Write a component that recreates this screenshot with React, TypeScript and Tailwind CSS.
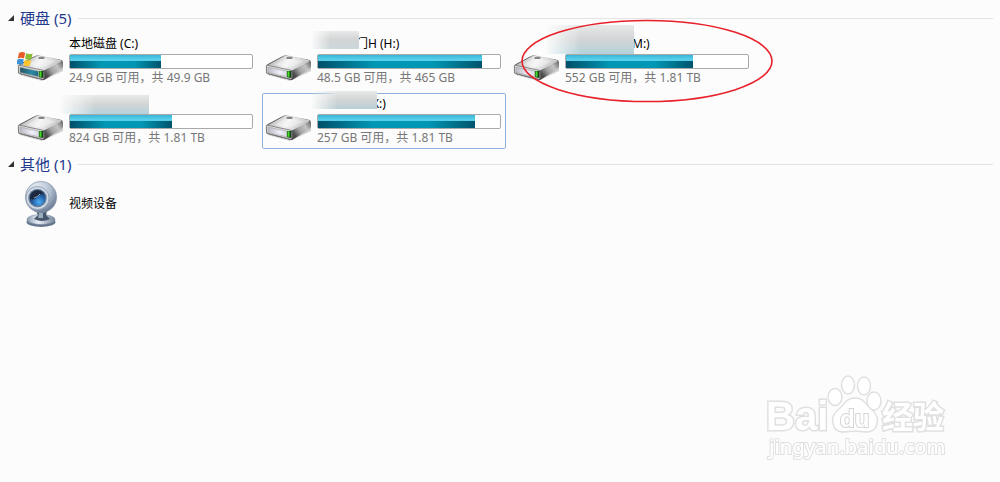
import { useId } from "react";

type Drive = {
    id: string;
    name: string;
    mask?: string;
    smudge?: string;
    info: string;
    used: number;
    system?: boolean;
    selected?: boolean;
    circled?: boolean;
};

const drives: Drive[] = [
    { id: "c", name: "本地磁盘 (C:)", info: "24.9 GB 可用，共 49.9 GB", used: 50, system: true },
    { id: "h", name: "门H (H:)", mask: "w-[39px]", smudge: "-left-1.5 -top-[5px] h-[18px] w-12 to-[#cbd8dc]", info: "48.5 GB 可用，共 465 GB", used: 90 },
    { id: "m", name: "M:)", mask: "w-[67px]", smudge: "-left-5 -top-[11px] h-[29px] w-[89px] to-[#b3d3dc]", info: "552 GB 可用，共 1.81 TB", used: 70, circled: true },
    { id: "l", name: "", mask: "w-[80px]", smudge: "-left-2.5 -top-px h-[19px] w-[90px] to-[#b3d3dc]", info: "824 GB 可用，共 1.81 TB", used: 56 },
    { id: "k", name: "X:)", mask: "w-[55px]", smudge: "-left-1.5 -top-[5px] h-[18px] w-[66px] to-[#b9cfd5]", info: "257 GB 可用，共 1.81 TB", used: 86, selected: true },
];

const DriveIcon = ({ system }: { system?: boolean }) => {
    const id = useId();
    return (
        <svg className="mt-4 h-8 w-12 shrink-0" viewBox="0 0 48 32" fill="none" aria-hidden="true">
            <defs>
                <linearGradient id={`${id}top`} x1="10" y1="4" x2="34" y2="22" gradientUnits="userSpaceOnUse">
                    <stop stopColor="#b9b9b9" />
                    <stop offset=".5" stopColor="#f2f2f2" />
                    <stop offset="1" stopColor="#c9c9c9" />
                </linearGradient>
                <linearGradient id={`${id}side`} x1="30" y1="26" x2="46" y2="14" gradientUnits="userSpaceOnUse">
                    <stop stopColor="#4a4a4a" />
                    <stop offset=".35" stopColor="#a4a4a4" />
                    <stop offset=".7" stopColor="#c2c2c2" />
                    <stop offset="1" stopColor="#777" />
                </linearGradient>
                <linearGradient id={`${id}front`} x1="3" y1="18" x2="27" y2="25" gradientUnits="userSpaceOnUse">
                    <stop stopColor={system ? "#28505f" : "#b8b8c0"} />
                    <stop offset=".5" stopColor={system ? "#2b8ba6" : "#f0f0fc"} />
                    <stop offset="1" stopColor={system ? "#164b5b" : "#c9c9d8"} />
                </linearGradient>
            </defs>
            <path d="M1 22l22 8 23-12v3L25 31 3 25z" fill="#000" opacity=".18" />
            <path d="M1 16.500Q1 15 3 14L18 6q2-1 4-.6L43 9.500q3 .5 3 3V17q0 1-1.500 2L28 29.500q-1 .8-3 .4L3 24q-2-.5-2-2z" fill={`url(#${id}side)`} />
            <path d="M2 15.500L18.500 6.500q2-1 4-.6l21 4q1.500.5.500 1.500L28 20q-1 .7-3 .4z" fill={`url(#${id}top)`} />
            <path d="M10 14.500L21.500 8l17 3.300L26 17.500z" fill="#fff" opacity=".35" />
            <path d="M1.300 16q.2-1 1.500-.7L25 20q2 .3 2 2v5.500q0 2-2 1.600L3 23.500q-1.500-.3-1.500-1.500z" fill="#dadada" stroke="#777" strokeWidth=".8" />
            <path d="M3 17.200l18.500 4v5.500L3 22.500z" fill={`url(#${id}front)`} stroke="#999" strokeWidth=".5" />
            <path d="M22 21h4.500v7l-4.500-.8z" fill="#174018" />
            <path d="M22.500 21.300h2v5.500h-2z" fill="#42df25" />
            <ellipse cx="24.500" cy="7.900" rx="3.200" ry="1.200" fill="#858585" />
            {system && (
                <g>
                    <path d="M2 3Q5 1.200 8.200 3L7 8.500Q4 7 .8 8.500z" fill="#e75b27" />
                    <path d="M9.200 3.300q3.200 1.500 6.500.1l-1.300 5.500q-3 1.500-6.300 0z" fill="#8abd34" />
                    <path d="M.5 9.500q3-1.500 6.300 0l-1.300 5.300q-3-1.500-6.200 0z" fill="#3c91d8" />
                    <path d="M7.700 9.800q3.300 1.500 6.500.1l-1.300 5.500q-3 1.500-6.400-.2z" fill="#fdc52a" />
                </g>
            )}
        </svg>
    );
};

const WebcamIcon = () => (
    <svg className="h-12 w-12 shrink-0" viewBox="0 0 48 48" aria-hidden="true">
        <defs>
            <radialGradient id="camBody" cx=".35" cy=".25" r=".8">
                <stop stopColor="#eef3f8" />
                <stop offset=".55" stopColor="#b4c1d3" />
                <stop offset="1" stopColor="#64758d" />
            </radialGradient>
            <radialGradient id="camLens" cx=".6" cy=".75" r=".65">
                <stop stopColor="#4db0f4" />
                <stop offset=".5" stopColor="#2a6fb8" />
                <stop offset="1" stopColor="#1a3559" />
            </radialGradient>
            <linearGradient id="camFoot">
                <stop stopColor="#8a9ab0" />
                <stop offset=".4" stopColor="#edf2f7" />
                <stop offset="1" stopColor="#75859b" />
            </linearGradient>
        </defs>
        <ellipse cx="24" cy="42" rx="14.500" ry="5" fill="#66768d" />
        <ellipse cx="24" cy="39.500" rx="14" ry="5" fill="url(#camFoot)" stroke="#7b8ca3" strokeWidth=".6" />
        <path d="M19 31h11l-1 4 4 4q-8 4-16 0l4-4z" fill="#46566c" />
        <path d="M22 33h4v5h-5z" fill="#9cabbd" />
        <circle cx="24" cy="17" r="15.700" fill="url(#camBody)" stroke="#8999af" strokeWidth=".7" />
        <circle cx="20.500" cy="18" r="11.500" fill="#d3ddea" stroke="#8595ab" strokeWidth=".8" />
        <circle cx="20.500" cy="18" r="9.300" fill="#71839b" />
        <circle cx="20.500" cy="18" r="8" fill="url(#camLens)" />
        <path d="M13 19q0-7 7-8.500 4 0 6 2.500-3 1-5 3.500-3 4-8 2.500z" fill="#1d2a3f" />
        <path d="M17 18q4-1 6-4" stroke="#8fb0d0" strokeWidth="1" fill="none" />
    </svg>
);

const SectionHeader = ({ title }: { title: string }) => (
    <h2 className="flex h-[30px] items-center pl-2 pr-[7px] text-[15px] text-[#25398c]">
        <svg className="mr-1.5 size-1.5 shrink-0" viewBox="0 0 6 6" aria-hidden="true">
            <path d="M6 0v6H0z" fill="#333" />
        </svg>
        {title}
        <span className="ml-[7px] mt-px h-px flex-1 bg-[#e2e3e6]" />
    </h2>
);

const DriveTile = ({ drive }: { drive: Drive }) => (
    <li className={`relative flex h-14 w-61 rounded-xs border pl-0.5 pr-1 ${drive.selected ? "border-[#8fb2dc]" : "border-transparent"}`}>
        <DriveIcon system={drive.system} />
        <div className="ml-1 flex-1 pt-0.5">
            <div className="relative flex h-4 items-center text-xs text-black">
                {drive.mask && <span className={`shrink-0 ${drive.mask}`} />}
                {drive.name}
                {drive.smudge && <span className={`absolute bg-linear-to-b from-[#e8e9e9] via-[#d2d4d5] mask-l-from-60% ${drive.smudge}`} />}
            </div>
            <div className="mt-0.5 h-[15px] rounded-xs border border-[#aaa] bg-white" role="meter" aria-label={drive.info} aria-valuenow={drive.used} aria-valuemin={0} aria-valuemax={100}>
                <div className="h-full bg-[linear-gradient(to_bottom,#38b5d6,#5fd5ef_42%,transparent_46%),linear-gradient(to_right,#004f68,#0097b4_35%,#0097b4_70%,#00546c)]" style={{ width: `${drive.used}%` }} />
            </div>
            <p className="mt-px whitespace-nowrap text-xs/4 text-[#777]">{drive.info}</p>
        </div>
        {drive.circled && (
            <svg className="pointer-events-none absolute -top-[15px] left-2.5 h-[84px] w-[254px]" viewBox="0 0 254 84" fill="none" aria-hidden="true">
                <ellipse cx="126" cy="42" rx="125" ry="40.500" stroke="#e8202a" strokeWidth="1.600" />
            </svg>
        )}
    </li>
);

const Watermark = () => (
    <svg className="fixed bottom-4 right-12 h-[95px] w-[190px]" viewBox="0 0 190 95" fill="#fff" stroke="#e0e0e0" strokeWidth="1.500" aria-hidden="true">
        <g paintOrder="stroke" strokeWidth="3" fontFamily="Liberation Sans, Noto Sans CJK SC, sans-serif" fontWeight="700">
            <text x="4" y="59" fontSize="40">Bai</text>
            <text x="120" y="57" fontSize="31" fontFamily="Noto Sans CJK SC, sans-serif">经验</text>
            <text x="7" y="83" fontSize="20" fontFamily="Noto Sans, sans-serif" fontWeight="500" strokeWidth="2">jingyan.baidu.com</text>
        </g>
        <ellipse cx="73" cy="26" rx="7" ry="8.500" />
        <ellipse cx="86" cy="14" rx="6.500" ry="9" />
        <ellipse cx="102" cy="15" rx="6.500" ry="9" />
        <ellipse cx="112" cy="30" rx="7" ry="9" />
        <path d="M93 27c9 0 11 7 17 12 9 7 6 22-5 22-5 0-7-1-12-1s-7 1-12 1c-11 0-14-15-5-22 6-5 8-12 17-12z" />
        <text x="78" y="56" fontSize="24" fontFamily="Liberation Sans, sans-serif" fontWeight="700" paintOrder="stroke" strokeWidth="2" stroke="#d5d5d5">du</text>
    </svg>
);

const App = () => {
    return (
        <main className="min-h-screen bg-[#fcfcfc] pt-[3px] font-['Noto_Sans','Noto_Sans_CJK_SC',sans-serif]">
            <section>
                <SectionHeader title="硬盘 (5)" />
                <ul className="flex max-w-[760px] flex-wrap gap-1 pl-3.5">
                    {drives.map((drive) => (
                        <DriveTile key={drive.id} drive={drive} />
                    ))}
                </ul>
            </section>
            <section>
                <SectionHeader title="其他 (1)" />
                <div className="flex items-center gap-1 pl-[17px] pt-px text-xs text-black">
                    <WebcamIcon />
                    视频设备
                </div>
            </section>
            <Watermark />
        </main>
    );
};

export default App;
